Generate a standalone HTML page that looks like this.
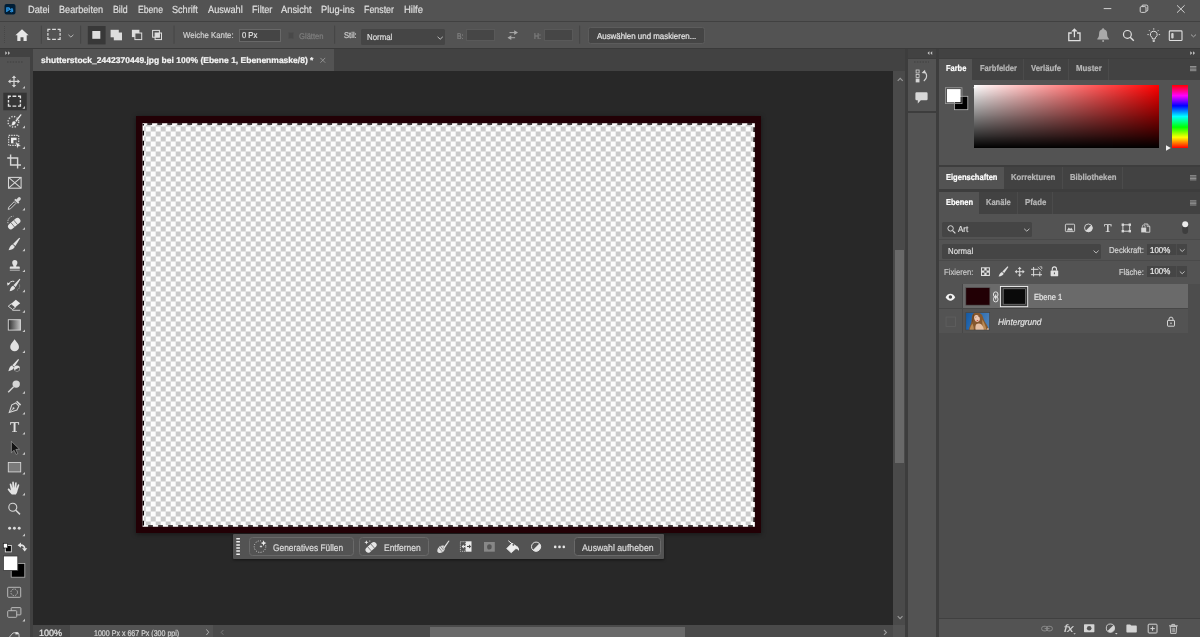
<!DOCTYPE html>
<html lang="de"><head><meta charset="utf-8"><title>Photoshop</title>
<style>
html,body{margin:0;padding:0;}
body{width:1200px;height:637px;overflow:hidden;background:#535353;position:relative;font-family:"Liberation Sans",sans-serif;}
#app{position:absolute;left:0;top:0;width:1200px;height:637px;overflow:hidden;will-change:transform;}
#app div{position:absolute;}
.t{position:absolute;white-space:nowrap;transform-origin:left center;display:block;text-rendering:geometricPrecision;-webkit-text-stroke:0.22px currentColor;}
svg{position:absolute;left:0;top:0;}
</style></head><body><div id="app">
<div style="left:0.00px;top:0.00px;width:1200.00px;height:637.00px;background:#3d3d3d;"></div>
<div style="left:0.00px;top:0.00px;width:1200.00px;height:21.30px;background:#535353;"></div>
<div style="left:0.00px;top:21.30px;width:1200.00px;height:1.00px;background:#414141;"></div>
<div style="left:0.00px;top:22.30px;width:1200.00px;height:25.40px;background:#535353;"></div>
<div style="left:0.00px;top:47.70px;width:1200.00px;height:0.90px;background:#3a3a3a;"></div>
<div style="left:0.00px;top:48.60px;width:30.30px;height:588.40px;background:#535353;"></div>
<div style="left:0.00px;top:48.60px;width:30.30px;height:8.90px;background:#424242;"></div>
<div style="left:30.30px;top:48.60px;width:2.70px;height:588.40px;background:#414141;"></div>
<div style="left:33.00px;top:48.60px;width:872.30px;height:588.40px;background:#424242;"></div>
<div style="left:33.00px;top:48.60px;width:300.75px;height:23.40px;background:#535353;"></div>
<div style="left:893.00px;top:71.00px;width:12.30px;height:566.00px;background:#4a4a4a;"></div>
<div style="left:33.00px;top:71.00px;width:860.00px;height:566.00px;background:#282828;"></div>
<div style="left:894.70px;top:250.25px;width:9.00px;height:212.55px;background:#696969;"></div>
<div style="left:33.00px;top:624.75px;width:860.00px;height:12.25px;background:#4a4a4a;"></div>
<div style="left:33.00px;top:624.75px;width:37.00px;height:12.25px;background:#474747;"></div>
<div style="left:70.00px;top:624.75px;width:142.50px;height:12.25px;background:#535353;"></div>
<div style="left:429.60px;top:627.30px;width:255.40px;height:9.70px;background:#696969;"></div>
<div style="left:893.00px;top:624.75px;width:12.30px;height:12.25px;background:#535353;"></div>
<div style="left:905.30px;top:48.60px;width:2.30px;height:588.40px;background:#3d3d3d;"></div>
<div style="left:907.60px;top:48.60px;width:292.40px;height:9.00px;background:#424242;"></div>
<div style="left:907.60px;top:58.60px;width:28.80px;height:52.10px;background:#535353;"></div>
<div style="left:907.60px;top:112.80px;width:28.80px;height:524.20px;background:#535353;"></div>
<div style="left:936.40px;top:48.60px;width:2.60px;height:588.40px;background:#3d3d3d;"></div>
<div style="left:939.00px;top:48.60px;width:261.00px;height:9.00px;background:#424242;"></div>
<div style="left:939.00px;top:58.60px;width:261.00px;height:106.15px;background:#535353;"></div>
<div style="left:972.00px;top:58.60px;width:228.00px;height:21.20px;background:#424242;"></div>
<div style="left:1022.60px;top:58.60px;width:0.80px;height:21.20px;background:#4b4b4b;"></div>
<div style="left:1067.80px;top:58.60px;width:0.80px;height:21.20px;background:#4b4b4b;"></div>
<div style="left:1107.60px;top:58.60px;width:0.80px;height:21.20px;background:#4b4b4b;"></div>
<div style="left:939.00px;top:167.00px;width:261.00px;height:21.70px;background:#535353;"></div>
<div style="left:1003.50px;top:167.00px;width:196.50px;height:21.70px;background:#424242;"></div>
<div style="left:1061.80px;top:167.00px;width:0.80px;height:21.70px;background:#4b4b4b;"></div>
<div style="left:1121.80px;top:167.00px;width:0.80px;height:21.70px;background:#4b4b4b;"></div>
<div style="left:939.00px;top:191.50px;width:261.00px;height:445.50px;background:#535353;"></div>
<div style="left:978.50px;top:191.50px;width:221.50px;height:22.10px;background:#424242;"></div>
<div style="left:1017.10px;top:191.50px;width:0.80px;height:22.10px;background:#4b4b4b;"></div>
<div style="left:1052.10px;top:191.50px;width:0.80px;height:22.10px;background:#4b4b4b;"></div>
<div style="left:939.00px;top:284.00px;width:261.00px;height:334.20px;background:#4d4d4d;"></div>
<div style="left:939.00px;top:617.80px;width:261.00px;height:0.90px;background:#404040;"></div>
<div style="left:136.00px;top:116.40px;width:625.00px;height:416.90px;background:#220005;box-shadow:0 1px 5px rgba(0,0,0,0.45);"></div>
<div style="left:143.30px;top:124.00px;width:610.80px;height:402.00px;background:#fff;background:repeating-conic-gradient(#cbcbcb 0 25%,#fdfdfd 0 50%) -7.30px -7.50px/10px 10px;"></div>
<div style="left:239.20px;top:28.70px;width:41.60px;height:13.00px;background:#454545;box-sizing:border-box;border:1px solid #686868;"></div>
<div style="left:287.50px;top:31.60px;width:6.80px;height:7.80px;background:#494949;box-sizing:border-box;border:0.6px solid #4f4f4f;border-radius:1.6px;"></div>
<div style="left:361.00px;top:29.40px;width:84.00px;height:15.20px;background:#454545;border-radius:1.5px;"></div>
<div style="left:466.25px;top:28.75px;width:28.55px;height:12.65px;background:#464646;box-sizing:border-box;border:0.8px solid #595959;"></div>
<div style="left:544.40px;top:28.75px;width:28.40px;height:12.65px;background:#464646;box-sizing:border-box;border:0.8px solid #595959;"></div>
<div style="left:588.40px;top:26.50px;width:117.00px;height:17.10px;background:#454545;box-sizing:border-box;border:1px solid #5c5c5c;border-radius:2.5px;"></div>
<div style="left:973.50px;top:84.90px;width:185.90px;height:62.90px;background:#f00;background:linear-gradient(to bottom,rgba(0,0,0,0),#000),linear-gradient(to right,#fff,#f00);"></div>
<div style="left:1172.20px;top:84.90px;width:15.40px;height:62.90px;background:#f00;background:linear-gradient(to bottom,#f00 0%,#f0f 17%,#00f 33%,#0ff 50%,#0f0 67%,#ff0 83%,#f00 100%);"></div>
<div style="left:941.90px;top:222.00px;width:89.80px;height:14.75px;background:#454545;border-radius:1.5px;"></div>
<div style="left:939.00px;top:239.00px;width:261.00px;height:0.80px;background:#4a4a4a;"></div>
<div style="left:941.90px;top:243.70px;width:159.00px;height:15.00px;background:#454545;border-radius:1.5px;"></div>
<div style="left:1146.70px;top:243.90px;width:29.60px;height:10.90px;background:#454545;"></div>
<div style="left:1176.20px;top:243.90px;width:11.00px;height:10.90px;background:#454545;"></div>
<div style="left:1176.30px;top:243.90px;width:0.70px;height:10.90px;background:#4d4d4d;"></div>
<div style="left:939.00px;top:260.40px;width:261.00px;height:0.70px;background:#4a4a4a;"></div>
<div style="left:1146.70px;top:266.20px;width:29.60px;height:10.80px;background:#454545;"></div>
<div style="left:1176.20px;top:266.20px;width:11.00px;height:10.80px;background:#454545;"></div>
<div style="left:1176.30px;top:266.20px;width:0.70px;height:10.80px;background:#4d4d4d;"></div>
<div style="left:939.00px;top:284.00px;width:23.30px;height:49.40px;background:#535353;"></div>
<div style="left:962.60px;top:284.00px;width:225.00px;height:24.00px;background:#6a6a6a;"></div>
<div style="left:962.60px;top:308.60px;width:225.00px;height:24.80px;background:#535353;"></div>
<div style="left:939.00px;top:308.00px;width:248.60px;height:0.60px;background:#474747;"></div>
<div style="left:962.10px;top:284.00px;width:0.60px;height:49.40px;background:#474747;"></div>
<div style="left:233.10px;top:534.00px;width:430.90px;height:25.00px;background:#535353;box-shadow:0 1px 3px rgba(0,0,0,0.5);border-radius:1px;"></div>
<div style="left:249.00px;top:537.20px;width:105.40px;height:18.90px;background:#535353;box-sizing:border-box;border:1px solid #696969;border-radius:3.5px;"></div>
<div style="left:359.40px;top:537.20px;width:69.60px;height:18.90px;background:#535353;box-sizing:border-box;border:1px solid #696969;border-radius:3.5px;"></div>
<div style="left:574.40px;top:537.20px;width:86.20px;height:18.90px;background:#454545;box-sizing:border-box;border:1px solid #696969;border-radius:3.5px;"></div>
<svg width="1200" height="637" viewBox="0 0 1200 637">
<rect x="143.30" y="124.00" width="610.80" height="402.00" fill="none" stroke="#fff" stroke-width="1.5"/>
<rect x="143.30" y="124.00" width="610.80" height="402.00" fill="none" stroke="#0c0002" stroke-width="1.5" stroke-dasharray="4.8 5.2" stroke-dashoffset="-4"/>
<rect x="4.5" y="4" width="11" height="10.4" rx="2" fill="#001e36"/>
<path d="M1103.7 8.6h7.6" stroke="#e0e0e0" stroke-width="0.9" fill="none"/>
<rect x="1140.2" y="6.6" width="5.8" height="5.8" rx="1.2" fill="none" stroke="#e0e0e0" stroke-width="0.9"/>
<path d="M1141.8 6.6v-0.3a1.2 1.2 0 0 1 1.2-1.2h3.6a1.2 1.2 0 0 1 1.2 1.2v3.6a1.2 1.2 0 0 1-1.2 1.2h-0.5" fill="none" stroke="#e0e0e0" stroke-width="0.9"/>
<path d="M1177 5.3l7.6 7.4M1184.6 5.3l-7.6 7.4" stroke="#e0e0e0" stroke-width="0.9" fill="none"/>
<path d="M4.5 26v18" stroke="#444" stroke-width="0.8" stroke-dasharray="1 1" fill="none"/>
<path d="M22 29.2l-6.6 6.1h1.9v5.6h3.2v-3.6h3v3.6h3.2v-5.6h1.9z" fill="#e6e6e6"/>
<path d="M41.3 25.6v18.2" stroke="#444" stroke-width="0.9" fill="none"/>
<path d="M80.6 25.6v18.2" stroke="#444" stroke-width="0.9" fill="none"/>
<path d="M174.0 25.6v18.2" stroke="#444" stroke-width="0.9" fill="none"/>
<path d="M334.6 25.6v18.2" stroke="#444" stroke-width="0.9" fill="none"/>
<path d="M579.6 25.6v18.2" stroke="#444" stroke-width="0.9" fill="none"/>
<path d="M47.900 31.700v-2.300h2.500M52.100 29.400h3.800M57.600 29.400h2.500v2.300M60.100 33.100v2.600M60.100 37.100v2.300h-2.500M55.900 39.400h-3.800M50.400 39.400h-2.500v-2.300M47.900 35.700v-2.600" fill="none" stroke="#dcdcdc" stroke-width="1.200"/>
<path d="M68.4 34.8l2.5 2.3 2.5-2.3" stroke="#bdbdbd" stroke-width="0.9" fill="none"/>
<rect x="87.8" y="26" width="17.8" height="18.4" fill="#383838"/>
<rect x="92.3" y="31" width="8" height="7.8" fill="#dedede"/>
<rect x="110.6" y="29.8" width="8.2" height="7.5" fill="#dedede"/><rect x="113.8" y="32.5" width="8.2" height="7.8" fill="#dedede"/>
<rect x="131.9" y="29.8" width="7.5" height="7.3" fill="#dedede"/><rect x="134.9" y="33" width="6.8" height="6.6" fill="#535353" stroke="#dedede" stroke-width="1"/>
<rect x="152.6" y="30.4" width="6.8" height="6.8" fill="none" stroke="#dedede" stroke-width="1"/><rect x="155.1" y="33" width="6.4" height="6.6" fill="none" stroke="#dedede" stroke-width="1"/><rect x="155.1" y="33" width="4.3" height="4.2" fill="#dedede"/>
<path d="M437.6 36.8l2.6 2.4 2.6-2.4" stroke="#c8c8c8" stroke-width="0.9" fill="none"/>
<g fill="none" stroke="#a8a8a8" stroke-width="1"><path d="M509.5 32.6h6.3M508.8 37.7h6.3"/></g><path d="M514.2 30.2l3.8 2.4-3.8 2.4zM511.3 35.3l-3.8 2.4 3.8 2.4z" fill="#a8a8a8"/>
<path d="M1071.8 33h-3v7.6h11.2v-7.6h-3" fill="none" stroke="#e0e0e0" stroke-width="1.3"/><path d="M1074.4 37.2v-7" stroke="#e0e0e0" stroke-width="1.3" fill="none"/><path d="M1071.2 31.6l3.2-3.4 3.2 3.4z" fill="#e0e0e0"/>
<path d="M1103.1 28.2c0.6 0 1 0.4 1 1 2 0.6 3 2.2 3 4.4 0 2.6 0.6 4 1.8 5.2v0.7h-11.6v-0.7c1.2-1.2 1.8-2.6 1.8-5.2 0-2.2 1-3.8 3-4.4 0-0.6 0.4-1 1-1z" fill="#a9a9a9"/><circle cx="1103.1" cy="40.9" r="1" fill="#a9a9a9"/>
<circle cx="1127.4" cy="34.4" r="3.9" fill="none" stroke="#e0e0e0" stroke-width="1.2"/><path d="M1130.2 37.3l3.6 3.5" stroke="#e0e0e0" stroke-width="1.4" fill="none"/>
<path d="M1153.75 31.2a3.3 3.3 0 0 1 2 6c-0.5 0.5-0.7 1-0.7 1.8h-2.6c0-0.8-0.2-1.3-0.7-1.8a3.3 3.3 0 0 1 2-6z" fill="none" stroke="#e0e0e0" stroke-width="1"/><path d="M1152.6 40.2h2.3v1.2l-1.15 0.6-1.15-0.6z" fill="#e0e0e0"/><path d="M1153.75 28.2v1.5M1149 30.2l1 1M1158.5 30.2l-1 1M1147.4 34.6h1.4M1160.1 34.6h-1.4" stroke="#e0e0e0" stroke-width="0.9" fill="none"/>
<rect x="1169.3" y="30.9" width="12.7" height="9.6" rx="0.8" fill="none" stroke="#e0e0e0" stroke-width="1.1"/><rect x="1171.2" y="32.9" width="2.4" height="5.6" rx="1" fill="#cfcfcf"/>
<path d="M1191 34.6l2.5 2.2 2.5-2.2" stroke="#b0b0b0" stroke-width="0.9" fill="none"/>
<path d="M320.4 57.9l4.8 4.8M325.2 57.9l-4.8 4.8" stroke="#a0a0a0" stroke-width="0.8" fill="none"/>
<path d="M5.3 51.3l1.9 1.8-1.9 1.8zM8.1 51.3l1.9 1.8-1.9 1.8z" fill="#c8c8c8"/>
<path d="M7 62h16" stroke="#474747" stroke-width="1.6" stroke-dasharray="1.6 1.2" fill="none"/>
<path d="M897.7 80.8l2.5-2.4 2.5 2.4" stroke="#9a9a9a" stroke-width="1.15" fill="none"/>
<path d="M897.7 616.2l2.4 2.4 2.4-2.4" stroke="#9a9a9a" stroke-width="1.15" fill="none"/>
<path d="M884 630l2.4 2.4-2.4 2.4" stroke="#9a9a9a" stroke-width="1.15" fill="none"/>
<path d="M223.4 630l-2.2 2.4 2.2 2.4" stroke="#7c7c7c" stroke-width="0.9" fill="none"/>
<path d="M206.4 629.4l2.3 2.8-2.3 2.8" stroke="#b8b8b8" stroke-width="0.9" fill="none"/>
<g transform="translate(14 81.40)" fill="#d6d6d6" stroke="none"><rect x="-4.4" y="-0.6" width="8.8" height="1.2"/><rect x="-0.6" y="-4.4" width="1.2" height="8.8"/><path d="M0-6l2.2 2.5h-4.4zM0 6l2.2-2.5h-4.4zM-6 0l2.5-2.2v4.4zM6 0l-2.5-2.2v4.4z"/></g>
<path d="M25 86.00v2.6h-2.6z" fill="#c8c8c8"/>
<rect x="3.3" y="92.7" width="23.4" height="17.6" fill="#363636"/>
<path d="M8.500 98.600v-2.300h2.400M12.500 96.300h3.800M18 96.300h2.400v2.300M20.400 99.900v2.600M20.400 103.800v2.300h-2.400M16.300 106.100h-3.800M10.900 106.100h-2.400v-2.300M8.500 102.500v-2.600" fill="none" stroke="#e2e2e2" stroke-width="1.400"/>
<path d="M25 106.10v2.6h-2.6z" fill="#c8c8c8"/>
<g transform="translate(14 121.00)"><circle cx="-0.600" cy="0.800" r="5.300" fill="none" stroke="#d6d6d6" stroke-width="1.500" stroke-dasharray="1.300 1.475"/><path d="M6.300-6.800l-5.200 6.600 1.400 1.200 5-6.700c0.500-0.800-0.600-1.700-1.200-1.100z" fill="#f0f0f0" stroke="#535353" stroke-width="0.500"/><path d="M0.900 0.200c-1.800-0.600-2.900 0.800-3 2.300 0 1-0.600 1.500-1.300 1.800 2.600 1 5.500-0.600 5.300-3z" fill="#f0f0f0" stroke="#535353" stroke-width="0.400"/></g>
<path d="M25 125.60v2.6h-2.6z" fill="#c8c8c8"/>
<g transform="translate(14 141.70)"><rect x="-5.300" y="-6.300" width="10" height="10" fill="none" stroke="#d6d6d6" stroke-width="1.100" stroke-dasharray="1.500 1"/><rect x="-3" y="-4" width="5.600" height="5.600" fill="#ececec"/><rect x="-0.600" y="-1.600" width="3.400" height="3.400" fill="#535353"/><path d="M1.400-0.200l5.800 4.400-2.600 0.300-1.300 2.400z" fill="#ececec" stroke="#535353" stroke-width="0.500"/></g>
<path d="M25 146.30v2.6h-2.6z" fill="#c8c8c8"/>
<g transform="translate(14.200 161.60)" fill="none" stroke="#d6d6d6" stroke-width="1.400"><path d="M-3.600-7v10.400h10.400"/><path d="M-7-3.600h10.400v10.400"/></g>
<path d="M25 166.40v2.6h-2.6z" fill="#c8c8c8"/>
<g transform="translate(14.800 182.80)" fill="none" stroke="#d6d6d6" stroke-width="1.050"><rect x="-6.300" y="-5.400" width="12.600" height="10.800"/><path d="M-6.300-5.400l12.600 10.800M6.300-5.400l-12.600 10.800"/></g>
<g transform="translate(14 203.20)"><path d="M-5.8 6.2l0.6-2.3 5.4-5.4 1.7 1.7-5.4 5.4z" fill="none" stroke="#d6d6d6" stroke-width="0.9"/><path d="M0.2-3.2l1.3-1.3 0.9 0.9 1.6-1.9a1.6 1.6 0 0 1 2.4 2.2l-1.9 1.7 0.9 0.9-1.3 1.3z" fill="#d6d6d6"/></g>
<path d="M25 207.80v2.6h-2.6z" fill="#c8c8c8"/>
<g transform="translate(14 222.60)"><path d="M-6 0.600a5.600 5.600 0 0 1 5.400-7" fill="none" stroke="#d6d6d6" stroke-width="1" stroke-dasharray="1.300 1.100"/><g transform="rotate(-40 0.200 1)"><rect x="-7" y="-1.900" width="14.400" height="5.800" rx="2.900" fill="#e4e4e4"/><path d="M-1.700-1.900v5.800M2.100-1.900v5.800" stroke="#535353" stroke-width="0.700"/><path d="M-0.400 0.200v0.100M0.800 0.200v0.100M-0.400 1.700v0.100M0.800 1.700v0.100" stroke="#535353" stroke-width="0.600"/></g></g>
<path d="M25 227.20v2.6h-2.6z" fill="#c8c8c8"/>
<path d="M19.23 237.63L13.02 244.07L15.38 245.93L20.17 238.37z" fill="#e2e2e2"/><path d="M12.76 244.44L14.77 246.67Q13.89 249.32 8.60 250.20Q10.03 245.04 12.76 244.44z" fill="#e2e2e2"/>
<path d="M25 248.60v2.6h-2.6z" fill="#c8c8c8"/>
<g transform="translate(14.800 264.80)" fill="#e2e2e2"><path d="M-1.300 1.600c0-1.400-1.300-1.900-1.300-3.700a2.600 2.600 0 0 1 5.200 0c0 1.800-1.300 2.300-1.300 3.700h2.700c0.700 0 1 0.300 1 1v1.400h-10v-1.400c0-0.700 0.300-1 1-1z"/><rect x="-5" y="4.900" width="10" height="0.900" fill="#c8c8c8"/></g>
<path d="M25 269.40v2.6h-2.6z" fill="#c8c8c8"/>
<path d="M19.60 278.70L13.48 285.36L15.72 287.04L20.40 279.30z" fill="#e2e2e2"/><path d="M13.21 285.75L15.15 287.77Q14.50 290.30 9.60 291.20Q10.66 286.33 13.21 285.75z" fill="#e2e2e2"/>
<path d="M8.300 284.600c1-2.600 3.600-3.800 6-3.200" fill="none" stroke="#e2e2e2" stroke-width="1"/><path d="M7 282.400l3.200 1-2.600 2.400z" fill="#e2e2e2"/><path d="M19.400 284.600c0.800 2.400-0.400 4.800-2.600 5.800" fill="none" stroke="#cfcfcf" stroke-width="0.700" stroke-dasharray="0.900 0.900"/>
<path d="M25 289.60v2.6h-2.6z" fill="#c8c8c8"/>
<path d="M15.800 299.800l4.400 3.400-7.600 6.400-4.300-3.400z" fill="#e6e6e6"/><path d="M8.300 306.200l2.850-2.400 4.350 3.400-2.900 2.400z" fill="#535353" stroke="#e6e6e6" stroke-width="0.800"/><path d="M12.400 310.300h7.800" stroke="#d8d8d8" stroke-width="0.900"/>
<path d="M25 310.10v2.6h-2.6z" fill="#c8c8c8"/>
<defs><linearGradient id="gt" x1="0" x2="1" y1="0" y2="0"><stop offset="0" stop-color="#2e2e2e"/><stop offset="1" stop-color="#c4c4c4"/></linearGradient></defs>
<rect x="8.3" y="319.70" width="12.2" height="10.4" fill="url(#gt)" stroke="#d6d6d6" stroke-width="0.9"/>
<path d="M25 329.50v2.6h-2.6z" fill="#c8c8c8"/>
<path d="M14.600 339.30c2.200 3.200 4.400 5 4.400 7.600a4.400 4.400 0 0 1-8.800 0c0-2.600 2.200-4.400 4.400-7.600z" fill="#e2e2e2"/>
<path d="M25 350.30v2.6h-2.6z" fill="#c8c8c8"/>
<path d="M18.21 359.09L12.30 365.13L14.50 366.87L18.99 359.71z" fill="#e2e2e2"/><path d="M11.97 365.57L13.97 367.53Q13.34 370.11 8.40 371.20Q9.40 366.24 11.97 365.57z" fill="#e2e2e2"/>
<circle cx="17" cy="368.600" r="3" fill="#e2e2e2"/><path d="M14.700 369.900a2.500 2.500 0 0 0 4.500-2.400z" fill="#535353"/>
<g transform="translate(14 386.50)"><circle cx="2.2" cy="-2.4" r="3.7" fill="#d6d6d6"/><path d="M-0.4 0.2l-5.4 5.6" stroke="#d6d6d6" stroke-width="1.4"/></g>
<path d="M25 391.10v2.6h-2.6z" fill="#c8c8c8"/>
<g transform="translate(14.5 407.30) rotate(225)"><path d="M0-7.4l3.6 7.2-1.4 4.2h-4.4l-1.4-4.2z" fill="none" stroke="#d6d6d6" stroke-width="1.05"/><path d="M0-7v5" stroke="#d6d6d6" stroke-width="0.8"/><circle cx="0" cy="-1.4" r="1" fill="#d6d6d6"/><rect x="-2.8" y="5" width="5.6" height="1.6" fill="#d6d6d6"/></g>
<path d="M25 411.90v2.6h-2.6z" fill="#c8c8c8"/>
<path d="M25 432.00v2.6h-2.6z" fill="#c8c8c8"/>
<path d="M11.400 441.30v11.400l2.700-2.500 2 4.200 1.700-0.800-2-4.100 3.600-0.400z" fill="#141414" stroke="#c4c4c4" stroke-width="0.500"/>
<path d="M25 452.10v2.6h-2.6z" fill="#c8c8c8"/>
<rect x="8.3" y="462.50" width="12.4" height="9.4" fill="#7a7a7a" stroke="#d6d6d6" stroke-width="0.9"/>
<path d="M25 472.00v2.6h-2.6z" fill="#c8c8c8"/>
<g transform="translate(14.600 488.20)" fill="#e2e2e2"><path d="M-2.800 6.400c-1.600-1.400-2.800-3-4-4.800-0.500-1 0.800-1.800 1.600-0.900l1.600 1.600-1.300-6c-0.200-1.100 1.300-1.400 1.600-0.400l1.200 4.200-0.300-5.800c0-1.100 1.600-1.200 1.700-0.100l0.500 5.600 0.700-5c0.200-1.100 1.700-0.900 1.600 0.200l-0.400 5.300 1.400-3.600c0.400-1 1.800-0.500 1.500 0.500l-1.600 5.200c-0.400 1.700-0.800 2.800-1.700 4z"/></g>
<path d="M25 492.80v2.6h-2.6z" fill="#c8c8c8"/>
<g transform="translate(14 508.40)" fill="none" stroke="#d6d6d6"><circle cx="-1.2" cy="-1.2" r="4" stroke-width="1.1"/><path d="M1.8 1.8l4.2 4.2" stroke-width="1.5"/></g>
<g fill="#dcdcdc"><circle cx="9.600" cy="528.30" r="1.450"/><circle cx="14.400" cy="528.30" r="1.450"/><circle cx="19.200" cy="528.30" r="1.450"/></g>
<path d="M25 533.60v2.6h-2.6z" fill="#c8c8c8"/>
<rect x="5.300" y="545.600" width="6" height="6.300" fill="#000" stroke="#ececec" stroke-width="0.800"/><rect x="3.300" y="543.300" width="4.300" height="4.700" fill="#fff" stroke="#1c1c1c" stroke-width="0.700"/>
<path d="M20 545.200c3-0.300 4.700 1 4.700 3.600" fill="none" stroke="#e4e4e4" stroke-width="1.600"/><path d="M21 542.600v5.200l-3.400-2.600zM22.100 548.200h5.200l-2.600 3.400z" fill="#e4e4e4"/>
<rect x="11.2" y="563.6" width="13.6" height="13.6" fill="#000" stroke="#b4b4b4" stroke-width="0.8"/>
<rect x="3.4" y="556" width="14.4" height="14.4" fill="#fff" stroke="#3a3a3a" stroke-width="0.8"/>
<rect x="7.700" y="587.30" width="13" height="10" rx="0.800" fill="none" stroke="#c4c4c4" stroke-width="0.900"/><circle cx="14.200" cy="592.30" r="3.300" fill="none" stroke="#bcbcbc" stroke-width="0.900" stroke-dasharray="1.500 1.100"/>
<rect x="11.200" y="607.60" width="9.700" height="7.300" rx="0.800" fill="#5e5e5e" stroke="#c4c4c4" stroke-width="0.900"/><rect x="7.700" y="610.70" width="9" height="6.600" rx="0.800" fill="#535353" stroke="#c4c4c4" stroke-width="0.900"/>
<path d="M25 618.80v2.6h-2.6z" fill="#c8c8c8"/>
<path d="M9.5 637l3.4-4 4.4-0.6 1.6 1.4 0.2 3.2" fill="none" stroke="#c4c4c4" stroke-width="1"/><rect x="15.4" y="632.4" width="3" height="2" fill="#e0e0e0"/>
<path d="M929.4 51.3l-1.9 1.8 1.9 1.8zM932.2 51.3l-1.9 1.8 1.9 1.8z" fill="#c8c8c8"/>
<path d="M1190.3 51.3l1.9 1.8-1.9 1.8zM1193.1 51.3l1.9 1.8-1.9 1.8z" fill="#c8c8c8"/>
<path d="M914 62h15" stroke="#474747" stroke-width="1.6" stroke-dasharray="1.6 1.2" fill="none"/>
<g fill="none" stroke="#d4d4d4" stroke-width="0.8"><rect x="916.1" y="70" width="3" height="3"/><rect x="916.1" y="74.4" width="3" height="3"/></g><rect x="915.7" y="78.6" width="3.8" height="3.8" fill="#d4d4d4"/>
<path d="M923.6 71.6c3.6 1.4 4.4 6.2 0.2 9.4" fill="none" stroke="#d4d4d4" stroke-width="1.1"/><path d="M921.6 72.9l3.4-3.1 0.6 3.8z" fill="#d4d4d4"/>
<path d="M916.6 92.2h9.8a1.2 1.2 0 0 1 1.2 1.2v5.6a1.2 1.2 0 0 1-1.2 1.2h-5.6l-3 3.2v-3.2h-1.2a1.2 1.2 0 0 1-1.2-1.2v-5.6a1.2 1.2 0 0 1 1.2-1.2z" fill="#d8d8d8"/>
<path d="M1190 66.50h6.4M1190 67.90h6.4M1190 69.30h6.4M1190 70.70h6.4" stroke="#9a9a9a" stroke-width="0.9"/>
<path d="M1190 175.70h6.4M1190 177.10h6.4M1190 178.50h6.4M1190 179.90h6.4" stroke="#9a9a9a" stroke-width="0.9"/>
<path d="M1190 200.80h6.4M1190 202.20h6.4M1190 203.60h6.4M1190 205.00h6.4" stroke="#9a9a9a" stroke-width="0.9"/>
<rect x="954.4" y="96.3" width="13.4" height="13.4" fill="#000" stroke="#b4b4b4" stroke-width="0.8"/>
<rect x="945.6" y="87.7" width="16.4" height="15.9" fill="none" stroke="#9a9a9a" stroke-width="0.8"/>
<rect x="947" y="89.1" width="13.6" height="13.1" fill="#fff"/>
<defs><clipPath id="cf"><rect x="973.500" y="84.900" width="186" height="63"/></clipPath></defs><circle cx="973.700" cy="85.100" r="2.700" fill="none" stroke="#fff" stroke-width="1" clip-path="url(#cf)"/>
<path d="M1166 145.2l4.8 2.8-4.8 2.8z" fill="#f2f2f2"/>
<circle cx="950.6" cy="228.4" r="2.7" fill="none" stroke="#d8d8d8" stroke-width="1"/><path d="M952.6 230.6l2.8 2.8" stroke="#d8d8d8" stroke-width="1.2"/>
<path d="M1024.2 228.8l2.6 2.4 2.6-2.4" stroke="#c8c8c8" stroke-width="0.9" fill="none"/>
<rect x="1065.4" y="224.2" width="9.2" height="7.4" rx="0.8" fill="none" stroke="#d8d8d8" stroke-width="0.9"/><path d="M1066.800 230.400l2-3 1.300 1.700 1.100-1.400 2 2.700z" fill="#d8d8d8"/>
<circle cx="1088.4" cy="227.9" r="3.9" fill="none" stroke="#d8d8d8" stroke-width="0.9"/><path d="M1085.64 230.66a3.9 3.9 0 0 0 5.52-5.52z" fill="#d8d8d8"/>
<rect x="1122.9" y="224.8" width="6.8" height="6.4" fill="none" stroke="#d8d8d8" stroke-width="1"/><g fill="#d8d8d8"><rect x="1121.6" y="223.5" width="2.4" height="2.4"/><rect x="1128.6" y="223.5" width="2.4" height="2.4"/><rect x="1121.6" y="230" width="2.4" height="2.4"/><rect x="1128.6" y="230" width="2.4" height="2.4"/></g>
<path d="M1144 224h3.4l2.4 2.4v5.8h-4.2" fill="none" stroke="#d8d8d8" stroke-width="0.9"/><path d="M1147.2 224v2.6h2.6" fill="none" stroke="#d8d8d8" stroke-width="0.7"/><rect x="1141.2" y="227.6" width="5" height="4.8" fill="#d8d8d8"/><path d="M1142.4 227.6v-1.4a1.3 1.3 0 0 1 2.6 0v1.4" fill="none" stroke="#d8d8d8" stroke-width="0.8"/>
<rect x="1182.3" y="221.4" width="5.8" height="12.6" rx="2.9" fill="#3e3e3e"/><circle cx="1185.2" cy="224.2" r="3" fill="#ececec"/>
<path d="M1093.6 250.6l2.5 2.4 2.5-2.4" stroke="#c8c8c8" stroke-width="0.9" fill="none"/>
<path d="M1179.8 249.3l2.4 2.2 2.4-2.2" stroke="#c8c8c8" stroke-width="0.9" fill="none"/>
<rect x="981" y="267.3" width="8.9" height="8.7" fill="#e0e0e0"/><g fill="#535353"><rect x="982" y="268.3" width="2.3" height="2.2"/><rect x="986.6" y="268.3" width="2.3" height="2.2"/><rect x="984.3" y="270.5" width="2.3" height="2.2"/><rect x="982" y="272.7" width="2.3" height="2.2"/><rect x="986.6" y="272.7" width="2.3" height="2.2"/></g>
<path d="M1007.61 266.28L1002.37 271.54L1004.23 273.06L1008.39 266.92z" fill="#e0e0e0"/><path d="M1002.06 271.94L1003.65 273.74Q1002.88 275.86 998.60 276.60Q999.86 272.45 1002.06 271.94z" fill="#e0e0e0"/>
<g transform="translate(1019.7 271.7)" fill="#d8d8d8"><rect x="-3.4" y="-0.5" width="6.8" height="1"/><rect x="-0.5" y="-3.4" width="1" height="6.8"/><path d="M0-5l1.9 2.2h-3.8zM0 5l1.9-2.2h-3.8zM-5 0l2.2-1.9v3.8zM5 0l-2.2-1.9v3.8z"/></g>
<g fill="none" stroke="#dcdcdc" stroke-width="1"><path d="M1031 269.300h7.400M1031 274.700h11M1033.600 267v9.400M1039.800 271.600v4.800"/><path d="M1037.800 267l3.800 3.600" stroke-width="0.800"/><path d="M1039.600 266.800h2.200v2.200" stroke-width="0.700"/></g>
<rect x="1050.6" y="270.4" width="7.6" height="5.8" rx="0.6" fill="#e0e0e0"/><path d="M1052.3 270.4v-1.4a2.1 2.1 0 0 1 4.2 0v1.4" fill="none" stroke="#e0e0e0" stroke-width="1.1"/><rect x="1053.9" y="272.4" width="1" height="1.8" fill="#535353"/>
<path d="M1179.8 271.5l2.4 2.2 2.4-2.2" stroke="#c8c8c8" stroke-width="0.9" fill="none"/>
<path d="M945.6 297.3c2.4-4.6 7.2-4.6 9.6 0-2.4 4.6-7.2 4.6-9.6 0z" fill="#f4f4f4"/><circle cx="950.400" cy="297.100" r="1.750" fill="#4c4c4c"/>
<rect x="965.8" y="287.6" width="24.1" height="17.6" fill="#220005" stroke="#5a5a5a" stroke-width="0.7"/>
<g fill="none" stroke="#e4e4e4" stroke-width="1"><rect x="993.500" y="291.900" width="4.400" height="5.200" rx="2.100"/><rect x="993.500" y="296.700" width="4.400" height="5.200" rx="2.100"/></g><path d="M995.700 294.400v5" stroke="#e4e4e4" stroke-width="1.100"/>
<rect x="1000.400" y="286.500" width="27.300" height="20.200" fill="#3a3a3a" stroke="#f2f2f2" stroke-width="0.900"/><rect x="1003.200" y="288.800" width="22.300" height="15.400" fill="#0a0a0a" stroke="#8a8a8a" stroke-width="0.600"/>
<rect x="946" y="317" width="9.4" height="9.4" fill="none" stroke="#626262" stroke-width="0.7"/>
<defs><linearGradient id="ph" x1="0" x2="1" y1="0" y2="0.3"><stop offset="0" stop-color="#1559a3"/><stop offset="0.5" stop-color="#2a6db3"/><stop offset="1" stop-color="#4a7fb8"/></linearGradient><clipPath id="pc"><rect x="965.8" y="312.6" width="23.9" height="17.4"/></clipPath><filter id="pb" x="-10%" y="-10%" width="120%" height="120%"><feGaussianBlur stdDeviation="0.35"/></filter></defs>
<g clip-path="url(#pc)"><rect x="965.8" y="312.6" width="23.9" height="17.4" fill="url(#ph)"/><g filter="url(#pb)"><path d="M972 316c0.600-2.400 2.800-3.600 5.600-3.400 3 0.200 4.600 2 5.400 4.600 0.800 2.800 2.200 5 3.800 7.600 1 1.800 1.600 3.400 1.800 5.200h-19.800c0.200-2 0.800-3.800 1.800-5.600 1.200-2.400 1-5.600 1.400-8.400z" fill="#85582f"/><path d="M969.600 330c0.400-2.400 1.600-4.400 2.800-6.400 0.800 1.800 1.600 4 1.400 6.400zM982.400 319.600c1.400 3 3.400 6 4 10.400h-3.600c0-3.800-0.800-7-0.400-10.400z" fill="#b98a55"/><path d="M972.400 317.800c0.200-1.800 0.800-3.200 1.800-4.200-0.200 2.800-0.600 6.200-1.600 9-0.600-1.400-0.400-3.200-0.200-4.800z" fill="#6b4222"/><ellipse cx="977" cy="318.400" rx="2.700" ry="3.500" fill="#ecc8b4" transform="rotate(-18 977 318.400)"/><path d="M975.300 317.300l1.100-0.350M978.100 316.500l1.100-0.350" stroke="#6a4436" stroke-width="0.550"/><ellipse cx="977.500" cy="320.600" rx="0.900" ry="0.550" fill="#c4524a" transform="rotate(-18 977.500 320.600)"/><path d="M976 324.600c1.400-1.200 3.600-1.400 5.200-0.400 1.600 1.400 2.400 3.600 2.600 5.800h-8.200c-0.400-2-0.200-3.800 0.400-5.400z" fill="#e6c0a4"/><path d="M986.600 330c0.200-1.200 0.800-1.800 1.800-2l0.600 2z" fill="#e6c0a4"/></g></g>
<rect x="965.8" y="312.6" width="23.9" height="17.4" fill="none" stroke="#444" stroke-width="0.600"/>
<g transform="translate(1.100 0)"><rect x="1166.4" y="320.4" width="7" height="5.8" rx="0.5" fill="none" stroke="#d4d4d4" stroke-width="1"/><path d="M1167.9 320.4v-1.300a2 2 0 0 1 4 0v1.300" fill="none" stroke="#d4d4d4" stroke-width="1"/><rect x="1169.300" y="322.500" width="1.200" height="1.600" fill="#d4d4d4"/></g>
<g fill="none" stroke="#8a8a8a" stroke-width="1"><rect x="1041.6" y="626.3" width="6" height="4.600" rx="2.300"/><rect x="1046.400" y="626.3" width="6" height="4.600" rx="2.300"/></g><path d="M1044.600 628.600h5" stroke="#8a8a8a" stroke-width="1"/>
<path d="M1073.400 633.200h2.400l-1.200 1.400z" fill="#d4d4d4"/>
<rect x="1084" y="624.200" width="10.400" height="8" rx="0.600" fill="#d4d4d4"/><circle cx="1089.200" cy="628.200" r="2.300" fill="#535353"/>
<circle cx="1110.400" cy="628.100" r="4.100" fill="none" stroke="#d4d4d4" stroke-width="0.900"/><path d="M1107.500 631a4.100 4.100 0 0 0 5.800-5.800z" fill="#d4d4d4"/><path d="M1115 633h2.600l-1.300 1.500z" fill="#d4d4d4"/>
<path d="M1126.400 625.200a0.800 0.800 0 0 1 0.800-0.800h3l1 1.200h4.800a0.800 0.800 0 0 1 0.800 0.800v5.400a0.800 0.800 0 0 1-0.800 0.800h-8.800a0.800 0.800 0 0 1-0.800-0.800z" fill="#d4d4d4"/>
<rect x="1148.200" y="624.200" width="8.800" height="8.800" rx="0.800" fill="none" stroke="#d4d4d4" stroke-width="1"/><path d="M1150.400 628.600h4.400M1152.600 626.400v4.400" stroke="#d4d4d4" stroke-width="1"/>
<path d="M1170.200 626.400h6.400l-0.500 7h-5.400z" fill="none" stroke="#d4d4d4" stroke-width="0.900"/><path d="M1169 625.800h8.800M1171.800 625.600v-1.200h2.800v1.200" fill="none" stroke="#d4d4d4" stroke-width="0.900"/><path d="M1172.200 627.800v4.400M1173.400 627.800v4.400M1174.600 627.800v4.400" stroke="#d4d4d4" stroke-width="0.600"/>
<path d="M238.1 538v17.400" stroke="#f0f0f0" stroke-width="3.600" stroke-dasharray="1.500 1.580" fill="none"/>
<circle cx="260" cy="546.600" r="5.800" fill="none" stroke="#cfcfcf" stroke-width="1" stroke-dasharray="1 1.430"/>
<circle cx="263.600" cy="543.100" r="2.600" fill="#535353"/>
<path d="M263.600 540.300l0.800 2 2 0.800-2 0.800-0.800 2-0.800-2-2-0.800 2-0.800z" fill="#f0f0f0"/><path d="M261 545l0.450 1.050 1.050 0.450-1.050 0.450-0.450 1.050-0.450-1.050-1.050-0.450 1.050-0.450z" fill="#e4e4e4"/>
<g transform="rotate(-42 371 547.400)"><rect x="364.600" y="544.600" width="13" height="5.600" rx="2.800" fill="#e6e6e6"/><path d="M368.900 544.600v5.600M373.100 544.600v5.600" stroke="#535353" stroke-width="0.700"/></g>
<path d="M366.400 540.200l0.600 1.500 1.500 0.600-1.500 0.600-0.600 1.500-0.600-1.500-1.500-0.600 1.500-0.600z" fill="#e6e6e6"/><circle cx="369.800" cy="541" r="0.600" fill="#e6e6e6"/>
<path d="M443.600 545.600c-3.600-0.800-6.800 2.400-6.200 6.200 0.800 1.400 3 1.600 4.600 0.800 2.400-1.200 3.400-3.600 3-5.600z" fill="#dedede"/>
<path d="M438.600 547.200l3.600 4.600M440.200 545.800l3.400 4.400" stroke="#535353" stroke-width="0.600" fill="none"/>
<path d="M448.300 540.700l-5.200 7 1.400 1 4.800-7.200c0.400-0.700-0.500-1.400-1-0.800z" fill="#f0f0f0" stroke="#535353" stroke-width="0.400"/>
<rect x="465.800" y="541.300" width="5.700" height="10.400" fill="#ececec"/><rect x="460.400" y="541.700" width="5" height="9.600" fill="none" stroke="#d4d4d4" stroke-width="0.900" stroke-dasharray="1.100 1"/>
<path d="M467 546.500h2.400" stroke="#4a4a4a" stroke-width="1.100"/><path d="M469 544.600l2.200 1.900-2.200 1.900z" fill="#4a4a4a"/>
<path d="M463.400 546.500h2.400" stroke="#ececec" stroke-width="1.100"/><path d="M463.800 544.600l-2.200 1.900 2.200 1.900z" fill="#ececec"/>
<rect x="484" y="542" width="10.800" height="9.700" fill="#878787"/><ellipse cx="489.400" cy="546.900" rx="2.300" ry="2.600" fill="#555"/>
<path d="M506.700 548.600l5.300-5.400 5.500 3.800-6.250 5.750z" fill="#ececec" stroke="#ececec" stroke-width="0.800" stroke-linejoin="round"/>
<path d="M508.300 540.700l5 4.100" stroke="#ececec" stroke-width="1" fill="none"/><circle cx="513.300" cy="544.800" r="0.900" fill="#535353"/>
<path d="M516.600 546.400c2 0.200 2.800 2 2.300 4.500-0.700-1.300-1.500-1.800-2.900-2z" fill="#ececec"/>
<circle cx="536.100" cy="546.700" r="4.600" fill="none" stroke="#e6e6e6" stroke-width="1"/><path d="M532.850 549.950a4.600 4.600 0 0 0 6.500-6.500z" fill="#e6e6e6"/>
<g fill="#e6e6e6"><circle cx="555.200" cy="546.900" r="1.300"/><circle cx="559.500" cy="546.900" r="1.300"/><circle cx="563.800" cy="546.900" r="1.300"/></g>
</svg>
<span class="t" style="left:6.30px;top:0.64px;line-height:20px;height:20px;font-size:6.6px;color:#31a8ff;transform:scaleX(0.9290);font-weight:bold;">Ps</span>
<span class="t" style="left:27.50px;top:0.81px;line-height:20px;height:20px;font-size:10.4px;color:#dedede;transform:scaleX(0.8938);">Datei</span>
<span class="t" style="left:58.70px;top:0.81px;line-height:20px;height:20px;font-size:10.4px;color:#dedede;transform:scaleX(0.8766);">Bearbeiten</span>
<span class="t" style="left:112.80px;top:0.81px;line-height:20px;height:20px;font-size:10.4px;color:#dedede;transform:scaleX(0.8476);">Bild</span>
<span class="t" style="left:137.80px;top:0.81px;line-height:20px;height:20px;font-size:10.4px;color:#dedede;transform:scaleX(0.8313);">Ebene</span>
<span class="t" style="left:171.70px;top:0.81px;line-height:20px;height:20px;font-size:10.4px;color:#dedede;transform:scaleX(0.8753);">Schrift</span>
<span class="t" style="left:207.60px;top:0.81px;line-height:20px;height:20px;font-size:10.4px;color:#dedede;transform:scaleX(0.8852);">Auswahl</span>
<span class="t" style="left:251.60px;top:0.81px;line-height:20px;height:20px;font-size:10.4px;color:#dedede;transform:scaleX(0.8827);">Filter</span>
<span class="t" style="left:281.00px;top:0.81px;line-height:20px;height:20px;font-size:10.4px;color:#dedede;transform:scaleX(0.8972);">Ansicht</span>
<span class="t" style="left:321.40px;top:0.81px;line-height:20px;height:20px;font-size:10.4px;color:#dedede;transform:scaleX(0.8942);">Plug-ins</span>
<span class="t" style="left:364.00px;top:0.81px;line-height:20px;height:20px;font-size:10.4px;color:#dedede;transform:scaleX(0.8509);">Fenster</span>
<span class="t" style="left:404.00px;top:0.81px;line-height:20px;height:20px;font-size:10.4px;color:#dedede;transform:scaleX(0.9132);">Hilfe</span>
<span class="t" style="left:183.10px;top:25.02px;line-height:20px;height:20px;font-size:8.6px;color:#cfcfcf;transform:scaleX(0.9081);">Weiche Kante:</span>
<span class="t" style="left:241.90px;top:25.22px;line-height:20px;height:20px;font-size:8.6px;color:#e0e0e0;transform:scaleX(0.8891);">0 Px</span>
<span class="t" style="left:298.50px;top:25.95px;line-height:20px;height:20px;font-size:8.3px;color:#7e7e7e;transform:scaleX(0.9193);">Glätten</span>
<span class="t" style="left:343.50px;top:25.04px;line-height:20px;height:20px;font-size:8.4px;color:#cfcfcf;transform:scaleX(0.9105);">Stil:</span>
<span class="t" style="left:366.90px;top:27.42px;line-height:20px;height:20px;font-size:8.6px;color:#dcdcdc;transform:scaleX(0.9146);">Normal</span>
<span class="t" style="left:456.60px;top:25.74px;line-height:20px;height:20px;font-size:8.4px;color:#858585;transform:scaleX(0.8064);">B:</span>
<span class="t" style="left:534.00px;top:25.74px;line-height:20px;height:20px;font-size:8.4px;color:#858585;transform:scaleX(0.8333);">H:</span>
<span class="t" style="left:596.90px;top:25.52px;line-height:20px;height:20px;font-size:8.6px;color:#e0e0e0;transform:scaleX(0.9196);">Auswählen und maskieren...</span>
<span class="t" style="left:40.50px;top:49.95px;line-height:20px;height:20px;font-size:8.4px;color:#f4f4f4;transform:scaleX(1.0160);font-weight:bold;">shutterstock_2442370449.jpg bei 100% (Ebene 1, Ebenenmaske/8) *</span>
<span class="t" style="left:39.40px;top:622.77px;line-height:20px;height:20px;font-size:9.2px;color:#e4e4e4;transform:scaleX(0.9817);">100%</span>
<span class="t" style="left:94.25px;top:623.45px;line-height:20px;height:20px;font-size:8.3px;color:#d2d2d2;transform:scaleX(0.8514);">1000 Px x 667 Px (300 ppi)</span>
<span class="t" style="left:10.20px;top:418.10px;line-height:20px;height:20px;font-size:14.8px;color:#e2e2e2;transform:scaleX(1.0176);font-family:'Liberation Serif',serif;">T</span>
<span class="t" style="left:945.90px;top:58.01px;line-height:20px;height:20px;font-size:8.6px;color:#ffffff;transform:scaleX(0.8668);font-weight:bold;">Farbe</span>
<span class="t" style="left:979.80px;top:58.01px;line-height:20px;height:20px;font-size:8.6px;color:#b6b6b6;transform:scaleX(0.8798);font-weight:bold;">Farbfelder</span>
<span class="t" style="left:1031.20px;top:58.01px;line-height:20px;height:20px;font-size:8.6px;color:#b6b6b6;transform:scaleX(0.8995);font-weight:bold;">Verläufe</span>
<span class="t" style="left:1075.75px;top:58.01px;line-height:20px;height:20px;font-size:8.6px;color:#b6b6b6;transform:scaleX(0.9133);font-weight:bold;">Muster</span>
<span class="t" style="left:945.90px;top:166.81px;line-height:20px;height:20px;font-size:8.6px;color:#ffffff;transform:scaleX(0.8761);font-weight:bold;">Eigenschaften</span>
<span class="t" style="left:1010.80px;top:166.81px;line-height:20px;height:20px;font-size:8.6px;color:#b6b6b6;transform:scaleX(0.8979);font-weight:bold;">Korrekturen</span>
<span class="t" style="left:1069.50px;top:166.81px;line-height:20px;height:20px;font-size:8.6px;color:#b6b6b6;transform:scaleX(0.9011);font-weight:bold;">Bibliotheken</span>
<span class="t" style="left:945.90px;top:191.91px;line-height:20px;height:20px;font-size:8.6px;color:#ffffff;transform:scaleX(0.8692);font-weight:bold;">Ebenen</span>
<span class="t" style="left:985.80px;top:191.91px;line-height:20px;height:20px;font-size:8.6px;color:#b6b6b6;transform:scaleX(0.8758);font-weight:bold;">Kanäle</span>
<span class="t" style="left:1024.75px;top:191.91px;line-height:20px;height:20px;font-size:8.6px;color:#b6b6b6;transform:scaleX(0.9073);font-weight:bold;">Pfade</span>
<span class="t" style="left:958.20px;top:219.22px;line-height:20px;height:20px;font-size:8.6px;color:#dcdcdc;transform:scaleX(0.9190);">Art</span>
<span class="t" style="left:1103.80px;top:219.40px;line-height:20px;height:20px;font-size:11.6px;color:#e0e0e0;transform:scaleX(1.0584);font-family:'Liberation Serif',serif;">T</span>
<span class="t" style="left:947.80px;top:241.42px;line-height:20px;height:20px;font-size:8.6px;color:#dcdcdc;transform:scaleX(0.9092);">Normal</span>
<span class="t" style="left:1108.80px;top:240.42px;line-height:20px;height:20px;font-size:8.6px;color:#d0d0d0;transform:scaleX(0.8990);">Deckkraft:</span>
<span class="t" style="left:1149.60px;top:239.52px;line-height:20px;height:20px;font-size:8.6px;color:#e8e8e8;transform:scaleX(0.9274);">100%</span>
<span class="t" style="left:943.50px;top:262.42px;line-height:20px;height:20px;font-size:8.6px;color:#c4c4c4;transform:scaleX(0.8945);">Fixieren:</span>
<span class="t" style="left:1118.80px;top:261.82px;line-height:20px;height:20px;font-size:8.6px;color:#d0d0d0;transform:scaleX(0.8794);">Fläche:</span>
<span class="t" style="left:1149.60px;top:260.92px;line-height:20px;height:20px;font-size:8.6px;color:#e8e8e8;transform:scaleX(0.9274);">100%</span>
<span class="t" style="left:1034.20px;top:286.52px;line-height:20px;height:20px;font-size:8.8px;color:#e6e6e6;transform:scaleX(0.8632);">Ebene 1</span>
<span class="t" style="left:997.80px;top:311.94px;line-height:20px;height:20px;font-size:8.8px;color:#e0e0e0;transform:scaleX(0.9438);font-style:italic;">Hintergrund</span>
<span class="t" style="left:1064.00px;top:619.29px;line-height:20px;height:20px;font-size:10.6px;color:#d4d4d4;transform:scaleX(1.1401);font-style:italic;">fx</span>
<span class="t" style="left:272.90px;top:538.85px;line-height:20px;height:20px;font-size:9.6px;color:#dadada;transform:scaleX(0.8712);">Generatives Füllen</span>
<span class="t" style="left:383.50px;top:538.85px;line-height:20px;height:20px;font-size:9.6px;color:#dadada;transform:scaleX(0.8828);">Entfernen</span>
<span class="t" style="left:581.50px;top:538.85px;line-height:20px;height:20px;font-size:9.6px;color:#dadada;transform:scaleX(0.9064);">Auswahl aufheben</span>
</div></body></html>
